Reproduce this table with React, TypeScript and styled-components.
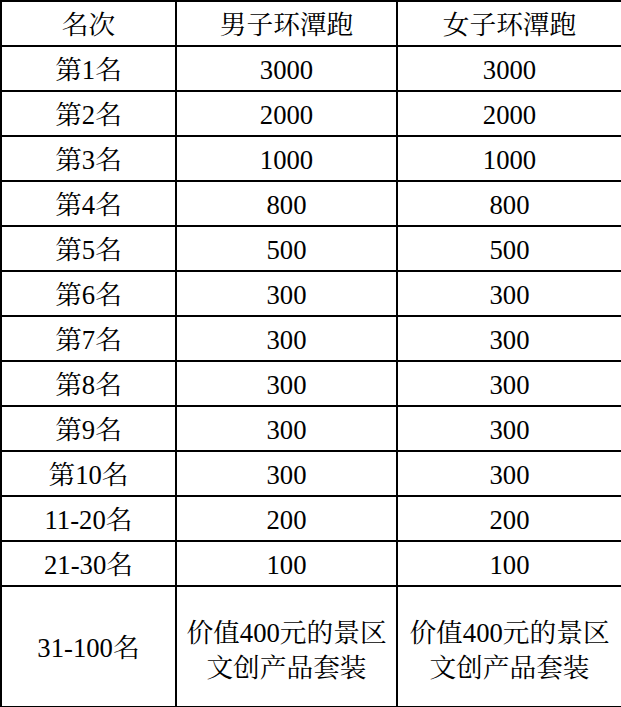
import React from 'react';
import styled, { createGlobalStyle } from 'styled-components';

const GlobalStyle = createGlobalStyle`
  html, body {
    margin: 0;
    padding: 0;
    background: #ffffff;
  }
`;

const Table = styled.table`
  border-collapse: collapse;
  width: 621px;
  table-layout: fixed;
  font-family: 'Liberation Serif', 'Noto Serif CJK SC', 'Noto Sans CJK SC', serif;
  font-size: 26.7px;
  color: #000000;
`;

const Row = styled.tr<{ $tall?: boolean }>`
  height: ${(p) => (p.$tall ? '121px' : '45px')};
`;

const Cell = styled.td<{ $lines?: boolean }>`
  border: 2px solid #000000;
  text-align: center;
  vertical-align: middle;
  padding: ${(p) => (p.$lines ? '8px 4px 0' : '3px 4px 0')};
  line-height: 35px;
  white-space: nowrap;
`;

const rows: [string, string][] = [
  ['第1名', '3000'],
  ['第2名', '2000'],
  ['第3名', '1000'],
  ['第4名', '800'],
  ['第5名', '500'],
  ['第6名', '300'],
  ['第7名', '300'],
  ['第8名', '300'],
  ['第9名', '300'],
  ['第10名', '300'],
  ['11-20名', '200'],
  ['21-30名', '100'],
];

const App: React.FC = () => {
  return (
    <>
      <GlobalStyle />
      <Table>
        <colgroup>
          <col style={{ width: 175 }} />
          <col style={{ width: 221 }} />
          <col style={{ width: 225 }} />
        </colgroup>
        <tbody>
          <Row>
            <Cell>名次</Cell>
            <Cell>男子环潭跑</Cell>
            <Cell>女子环潭跑</Cell>
          </Row>
          {rows.map(([rank, prize]) => (
            <Row key={rank}>
              <Cell>{rank}</Cell>
              <Cell>{prize}</Cell>
              <Cell>{prize}</Cell>
            </Row>
          ))}
          <Row $tall>
            <Cell>31-100名</Cell>
            <Cell $lines>
              价值400元的景区
              <br />
              文创产品套装
            </Cell>
            <Cell $lines>
              价值400元的景区
              <br />
              文创产品套装
            </Cell>
          </Row>
        </tbody>
      </Table>
    </>
  );
};

export default App;
